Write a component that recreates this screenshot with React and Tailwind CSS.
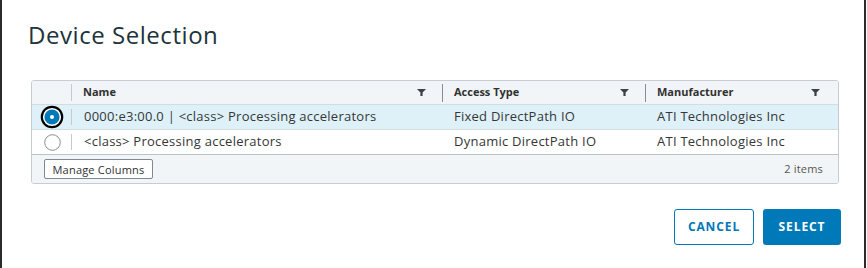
import React from "react";

function Filter() {
  return (
    <svg width="9" height="7" viewBox="0 0 9 7" className="shrink-0">
      <path d="M0 0H9L5.6 3.6V7H3.4V3.6Z" fill="#3a4349" />
    </svg>
  );
}

function RadioOn() {
  return (
    <svg width="24" height="24" viewBox="0 0 24 24">
      <circle cx="12" cy="12" r="10.2" fill="white" stroke="#000" strokeWidth="2.2" />
      <circle cx="12" cy="12" r="7.6" fill="#0079b8" />
      <circle cx="12" cy="12" r="2" fill="white" />
    </svg>
  );
}

function RadioOff() {
  return (
    <svg width="17" height="17" viewBox="0 0 17 17">
      <circle cx="8.5" cy="8.5" r="7.8" fill="white" stroke="#8c8c8c" strokeWidth="1" />
    </svg>
  );
}

export default function App() {
  const font = { fontFamily: "'Open Sans', 'Liberation Sans', sans-serif" };
  return (
    <div className="w-[867px] h-[268px] bg-white flex overflow-hidden" style={font}>
      <div className="w-[2px] h-full bg-[#2b2b2b]" />
      <div className="flex-1 flex flex-col pl-[29px] pr-[25px]">
        <h1 className="text-[24px] leading-[30px] text-[#21333b] pt-[20px] -ml-[3px] font-normal tracking-[0.55px]">
          Device Selection
        </h1>
        <div className="mt-[30px] border border-[#c5cdd2] rounded-[3px] overflow-hidden text-[#363636]">
          {/* header */}
          <div className="grid grid-cols-[40px_370px_203px_1fr] h-[24px] bg-[#f1f5f7] border-b border-[#d3dce1] items-center text-[11px] font-bold text-[#313131]">
            <div className="flex justify-end h-full items-center">
              <div className="w-px h-[17px] bg-[#c9c9c9]" />
            </div>
            <div className="flex items-center pl-[11px] pr-[16px] h-full">
              <span className="flex-1">Name</span>
              <Filter />
            </div>
            <div className="flex items-center h-full">
              <div className="w-px h-[18px] bg-[#8c8c8c]" />
              <span className="flex-1 pl-[11px]">Access Type</span>
              <div className="pr-[16px]"><Filter /></div>
            </div>
            <div className="flex items-center h-full">
              <div className="w-px h-[18px] bg-[#8c8c8c]" />
              <span className="flex-1 pl-[11px]">Manufacturer</span>
              <div className="pr-[18px]"><Filter /></div>
            </div>
          </div>
          {/* row 1 */}
          <div className="grid grid-cols-[40px_370px_203px_1fr] h-[25px] bg-[#def1f9] border-b border-[#d3dce1] items-center text-[13px] tracking-[0.25px]">
            <div className="flex items-center h-full">
              <div className="flex-1 flex justify-center pl-[1px]"><RadioOn /></div>
              <div className="w-px h-[16px] bg-[#c9c9c9]" />
            </div>
            <div className="pl-[12px]">0000:e3:00.0 | &lt;class&gt; Processing accelerators</div>
            <div className="pl-[12px]">Fixed DirectPath IO</div>
            <div className="pl-[12px]">ATI Technologies Inc</div>
          </div>
          {/* row 2 */}
          <div className="grid grid-cols-[40px_370px_203px_1fr] h-[25px] bg-white border-b border-[#b9c4ca] items-center text-[13px] tracking-[0.25px]">
            <div className="flex items-center h-full">
              <div className="flex-1 flex justify-center pl-[1px]"><RadioOff /></div>
              <div className="w-px h-[16px] bg-[#c9c9c9]" />
            </div>
            <div className="pl-[12px]">&lt;class&gt; Processing accelerators</div>
            <div className="pl-[12px]">Dynamic DirectPath IO</div>
            <div className="pl-[12px]">ATI Technologies Inc</div>
          </div>
          {/* footer */}
          <div className="h-[28px] bg-[#f1f5f7] flex items-center justify-between pl-[12px] pr-[15px]">
            <button className="h-[20px] w-[109px] border border-[#7d8a91] rounded-[2px] bg-white text-[11px] font-medium text-[#313131] leading-none tracking-[0.2px]">
              Manage Columns
            </button>
            <span className="text-[11px] text-[#565656] tracking-[0.2px]">2 items</span>
          </div>
        </div>
        <div className="flex justify-end gap-[9px] mt-[25px] -mr-[2px]">
          <button className="h-[36px] w-[80px] border border-[#0079b8] rounded-[3px] bg-white text-[#0079b8] text-[12px] font-bold tracking-[0.9px]">
            CANCEL
          </button>
          <button className="h-[36px] w-[78px] rounded-[3px] bg-[#0079b8] text-white text-[12px] font-bold tracking-[0.9px]">
            SELECT
          </button>
        </div>
      </div>
      <div className="w-[2px] h-full bg-[#2b2b2b]" />
      <div className="w-[1px] h-full bg-white" />
    </div>
  );
}
